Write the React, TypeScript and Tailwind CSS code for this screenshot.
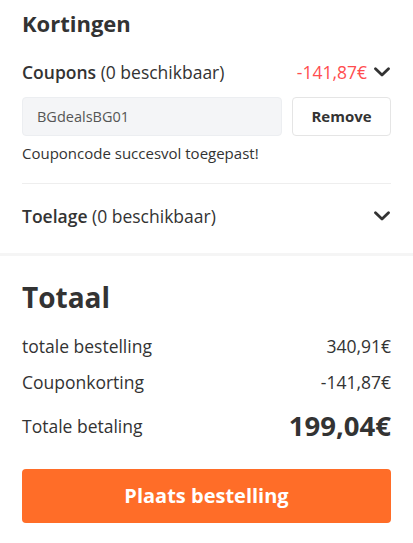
function Chevron() {
  return (
    <svg width="16" height="10" viewBox="0 0 16 10" fill="none" className="text-[#333]">
      <polyline
        points="1.5,1.8 8,8 14.5,1.8"
        stroke="currentColor"
        strokeWidth="2.8"
        strokeLinecap="round"
        strokeLinejoin="round"
      />
    </svg>
  );
}

export default function App() {
  return (
    <div className="w-[413px] bg-white text-[#333] font-['Open_Sans',sans-serif]">
      {/* Kortingen */}
      <div className="px-[22px] pt-[8px]">
        <h2 className="text-[22px] font-bold leading-[30px]">Kortingen</h2>

        <div className="mt-[21px] flex items-center justify-between h-[26px]">
          <div className="text-[17.5px]">
            <span className="font-semibold">Coupons</span> (0 beschikbaar)
          </div>
          <div className="flex items-center gap-[7px] pr-[1px]">
            <span className="text-[17.5px] text-[#ff4d4f]">-141,87€</span>
            <Chevron />
          </div>
        </div>

        <div className="mt-[12px] flex gap-[10px]">
          <div className="flex-1 h-[39px] rounded-[4px] bg-[#f4f5f7] border border-[#eceef1] flex items-center px-[14px] text-[14.5px] text-[#555]">
            BGdealsBG01
          </div>
          <button className="w-[99px] h-[39px] rounded-[4px] border border-[#e5e5e5] bg-white text-[15px] font-bold text-[#333]">
            Remove
          </button>
        </div>

        <p className="mt-[7px] text-[15px] leading-[20px]">Couponcode succesvol toegepast!</p>

        <div className="mt-[20px] border-t border-[#eeeeee]" />

        <div className="flex items-center justify-between h-[64px] mb-[5px] pr-[1px]">
          <div className="text-[17.5px]">
            <span className="font-semibold">Toelage</span> (0 beschikbaar)
          </div>
          <Chevron />
        </div>
      </div>

      <div className="h-[3px] bg-[#f5f5f5]" />

      {/* Totaal */}
      <div className="px-[22px] pt-[24px] pb-[20px]">
        <h2 className="text-[28px] font-bold leading-[34px]">Totaal</h2>

        <div className="mt-[14px] flex flex-col">
          <div className="flex justify-between items-center h-[36px] text-[17.5px]">
            <span>totale bestelling</span>
            <span>340,91€</span>
          </div>
          <div className="flex justify-between items-center h-[36px] text-[17.5px]">
            <span>Couponkorting</span>
            <span>-141,87€</span>
          </div>
          <div className="flex justify-between items-center h-[52px]">
            <span className="text-[17.5px]">Totale betaling</span>
            <span className="text-[27.5px] font-bold">199,04€</span>
          </div>
        </div>

        <button className="mt-[17px] w-full h-[54px] rounded-[4px] bg-[#ff6d28] text-white text-[20px] font-bold">
          Plaats bestelling
        </button>
      </div>
    </div>
  );
}
